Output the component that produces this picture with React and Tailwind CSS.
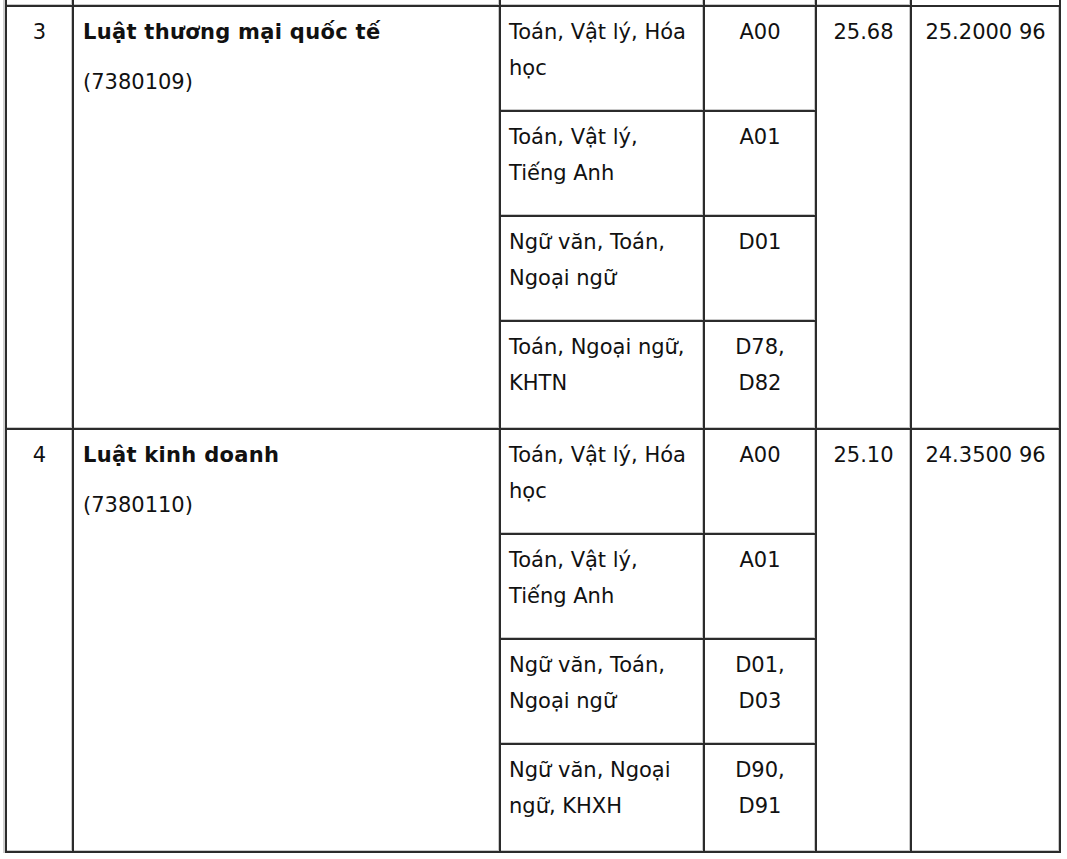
import React from 'react';

const rows = [
  {
    stt: '3',
    name: 'Luật thương mại quốc tế',
    code: '(7380109)',
    score: '25.68',
    score2: '25.2000 96',
    combos: [
      { subjects: ['Toán, Vật lý, Hóa', 'học'], block: ['A00'] },
      { subjects: ['Toán, Vật lý,', 'Tiếng Anh'], block: ['A01'] },
      { subjects: ['Ngữ văn, Toán,', 'Ngoại ngữ'], block: ['D01'] },
      { subjects: ['Toán, Ngoại ngữ,', 'KHTN'], block: ['D78,', 'D82'] },
    ],
  },
  {
    stt: '4',
    name: 'Luật kinh doanh',
    code: '(7380110)',
    score: '25.10',
    score2: '24.3500 96',
    combos: [
      { subjects: ['Toán, Vật lý, Hóa', 'học'], block: ['A00'] },
      { subjects: ['Toán, Vật lý,', 'Tiếng Anh'], block: ['A01'] },
      { subjects: ['Ngữ văn, Toán,', 'Ngoại ngữ'], block: ['D01,', 'D03'] },
      { subjects: ['Ngữ văn, Ngoại', 'ngữ, KHXH'], block: ['D90,', 'D91'] },
    ],
  },
];

const cell =
  'border-l-2 border-t-2 border-[#2b2b2b] shadow-[inset_-1px_-1px_0_#c8c8c8] align-top px-2 pt-[7px] pb-[10px]';

const Lines = ({ lines }) => (
  <p className="mb-[14px]">
    {lines.map((l, i) => (
      <React.Fragment key={i}>
        {l}
        {i < lines.length - 1 && <br />}
      </React.Fragment>
    ))}
  </p>
);

const App = () => {
  return (
    <div
      className="w-[1067px] h-[859px] overflow-hidden bg-white text-[#111] text-[21px] leading-[36px]"
      style={{ fontFamily: '"DejaVu Sans", Verdana, sans-serif' }}
    >
      <table className="table-fixed border-separate border-spacing-0 ml-[5px] -mt-[15px] border-r-2 border-b-2 border-[#2b2b2b] w-[1056px] shadow-[-2px_0_0_#d0d0d0]">
        <tbody>
          {/* tail of the previous row */}
          <tr>
            <td className="w-[67px] h-[20px] border-l-2 border-[#2b2b2b] shadow-[inset_-1px_-1px_0_#c8c8c8]"></td>
            <td className="w-[427px] border-l-2 border-[#2b2b2b] shadow-[inset_-1px_-1px_0_#c8c8c8]"></td>
            <td className="w-[204px] border-l-2 border-[#2b2b2b] shadow-[inset_-1px_-1px_0_#c8c8c8]"></td>
            <td className="w-[112px] border-l-2 border-[#2b2b2b] shadow-[inset_-1px_-1px_0_#c8c8c8]"></td>
            <td className="w-[95px] border-l-2 border-[#2b2b2b] shadow-[inset_-1px_-1px_0_#c8c8c8]"></td>
            <td className="border-l-2 border-[#2b2b2b]"></td>
          </tr>

          {rows.map((row) =>
            row.combos.map((combo, i) => (
              <tr key={row.stt + '-' + i}>
                {i === 0 && (
                  <>
                    <td rowSpan={4} className={`${cell} text-center`}>
                      <p className="mb-[14px]">{row.stt}</p>
                    </td>
                    <td rowSpan={4} className={`${cell} pl-[9px]`}>
                      <p className="mb-[14px] font-bold tracking-[0.3px]">{row.name}</p>
                      <p className="mb-[14px]">{row.code}</p>
                    </td>
                  </>
                )}
                <td className={`${cell} ${i === 3 ? 'h-[108px]' : 'h-[105px]'}`}>
                  <Lines lines={combo.subjects} />
                </td>
                <td className={`${cell} text-center`}>
                  <Lines lines={combo.block} />
                </td>
                {i === 0 && (
                  <>
                    <td rowSpan={4} className={`${cell} text-center`}>
                      <p className="mb-[14px]">{row.score}</p>
                    </td>
                    <td rowSpan={4} className={`${cell} text-center`}>
                      <p className="mb-[14px]">{row.score2}</p>
                    </td>
                  </>
                )}
              </tr>
            ))
          )}
        </tbody>
      </table>
    </div>
  );
};

export default App;
